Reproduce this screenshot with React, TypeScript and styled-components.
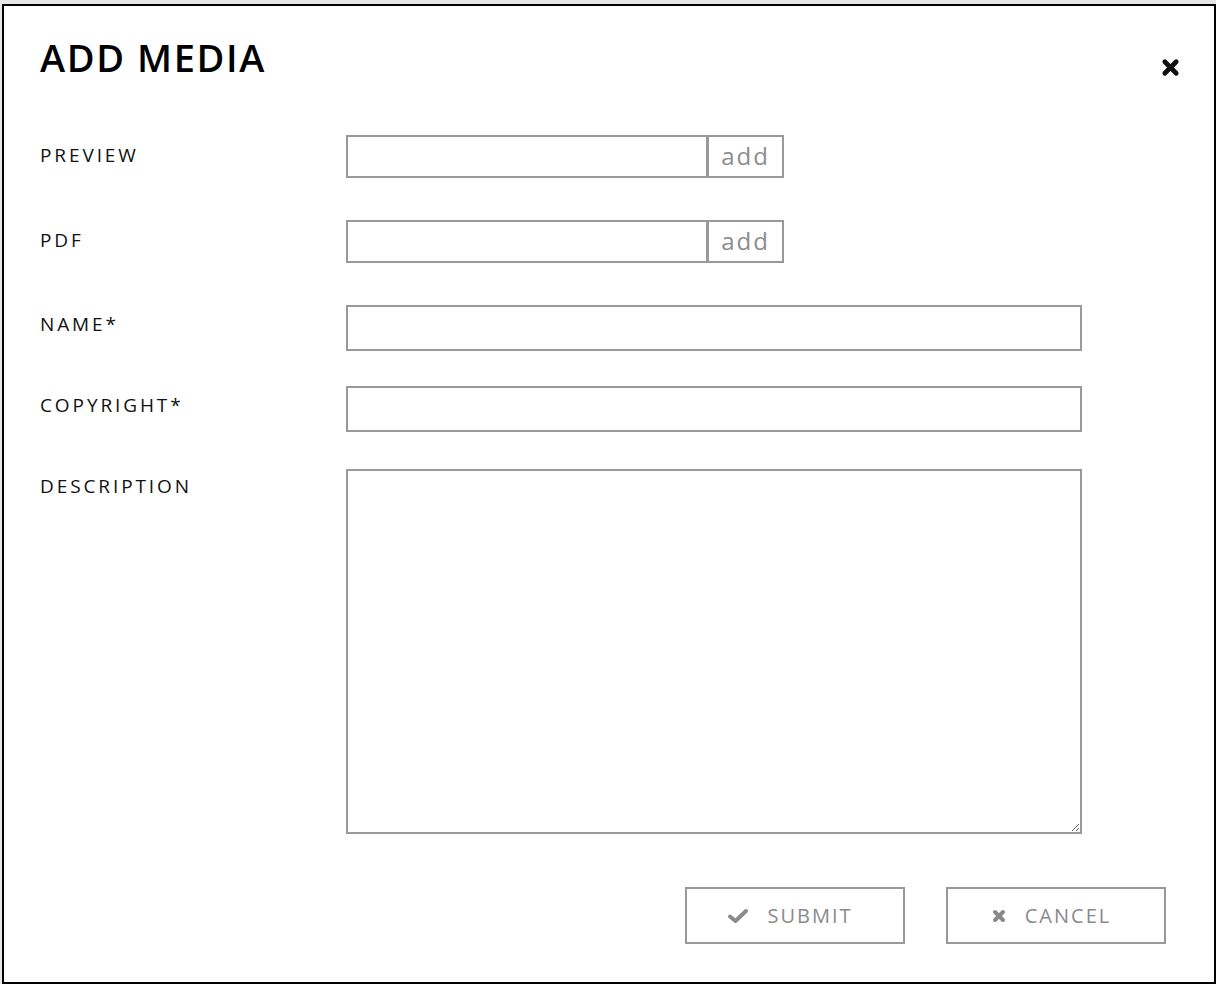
import React from "react";
import styled, { createGlobalStyle } from "styled-components";

const GlobalStyle = createGlobalStyle`
  html, body {
    margin: 0;
    padding: 0;
    background: #e6e6e6;
  }
  body {
    font-family: "Open Sans", "DejaVu Sans", sans-serif;
  }
`;

const fields = [
  { label: "PREVIEW", kind: "file" },
  { label: "PDF", kind: "file" },
  { label: "NAME*", kind: "text" },
  { label: "COPYRIGHT*", kind: "text" },
  { label: "DESCRIPTION", kind: "area" },
];

export default function App() {
  return (
    <>
      <GlobalStyle />
      <Backdrop>
        <Modal>
          <Header>
            <Title>ADD MEDIA</Title>
            <Close aria-label="close">
              <svg width="19" height="19" viewBox="0 0 20 20">
                <path
                  d="M4 4 L16 16 M16 4 L4 16"
                  stroke="#111"
                  strokeWidth="5"
                  strokeLinecap="round"
                />
              </svg>
            </Close>
          </Header>
          <Form>
            {fields.map((f) => (
              <Row key={f.label} $kind={f.kind}>
                <Label $kind={f.kind}>{f.label}</Label>
                {f.kind === "file" && (
                  <FileGroup>
                    <FileInput type="text" />
                    <AddButton type="button">add</AddButton>
                  </FileGroup>
                )}
                {f.kind === "text" && <TextInput type="text" />}
                {f.kind === "area" && <TextArea />}
              </Row>
            ))}
          </Form>
          <Actions>
            <ActionButton type="button">
              <svg width="22" height="16" viewBox="0 0 22 16">
                <path
                  d="M3 8.5 L8.5 13 L19 3"
                  fill="none"
                  stroke="#8a8a8a"
                  strokeWidth="4"
                  strokeLinejoin="round"
                  strokeLinecap="round"
                />
              </svg>
              SUBMIT
            </ActionButton>
            <ActionButton type="button">
              <svg width="16" height="16" viewBox="0 0 20 20">
                <path
                  d="M5 5 L15 15 M15 5 L5 15"
                  stroke="#8a8a8a"
                  strokeWidth="5"
                  strokeLinecap="round"
                />
              </svg>
              CANCEL
            </ActionButton>
          </Actions>
        </Modal>
      </Backdrop>
    </>
  );
}

const Backdrop = styled.div`
  padding: 4px 0 0 2px;
  height: 984px;
  box-sizing: border-box;
`;

const Modal = styled.div`
  width: 1214px;
  height: 980px;
  box-sizing: border-box;
  border: 2px solid #000;
  background: #fff;
  padding: 0 48px 0 36px;
  display: flex;
  flex-direction: column;
`;

const Header = styled.div`
  display: flex;
  justify-content: space-between;
  align-items: flex-start;
  height: 129px;
`;

const Title = styled.h1`
  margin: 25px 0 0 0;
  font-size: 38px;
  font-weight: 600;
  letter-spacing: 1.6px;
  color: #000;
  line-height: 52px;
`;

const Close = styled.button`
  background: none;
  border: none;
  padding: 0;
  margin: 52px -14px 0 0;
  cursor: pointer;
  display: flex;
`;

const Form = styled.div`
  display: flex;
  flex-direction: column;
`;

const Row = styled.div<{ $kind: string }>`
  display: flex;
  align-items: flex-start;
  margin-bottom: ${(p) => (p.$kind === "file" ? "42px" : "35px")};
`;

const Label = styled.div<{ $kind: string }>`
  width: 306px;
  flex-shrink: 0;
  font-size: 19px;
  letter-spacing: 2.9px;
  color: #111;
  padding-top: ${(p) => (p.$kind === "file" ? "8px" : "7px")};
  line-height: 24px;
`;

const FileGroup = styled.div`
  display: flex;
`;

const FileInput = styled.input`
  width: 362px;
  height: 43px;
  box-sizing: border-box;
  border: 2px solid #999;
  margin: 0;
  outline: none;
`;

const AddButton = styled.button`
  width: 77px;
  height: 43px;
  box-sizing: border-box;
  border: 2px solid #999;
  background: #fff;
  color: #8c8c8c;
  font-family: "Open Sans", sans-serif;
  font-size: 24px;
  letter-spacing: 2px;
  padding: 0 0 2px 0;
  margin: 0 0 0 -1px;
  line-height: 1;
`;

const TextInput = styled.input`
  width: 736px;
  height: 46px;
  box-sizing: border-box;
  border: 2px solid #999;
  margin: 0;
  outline: none;
`;

const TextArea = styled.textarea`
  width: 736px;
  height: 365px;
  box-sizing: border-box;
  border: 2px solid #999;
  margin: 2px 0 0 0;
  outline: none;
  resize: both;
`;

const Actions = styled.div`
  display: flex;
  justify-content: flex-end;
  gap: 41px;
  margin-top: 18px;
`;

const ActionButton = styled.button`
  width: 220px;
  height: 57px;
  box-sizing: border-box;
  border: 2px solid #999;
  background: #fff;
  color: #8a8a8a;
  font-family: "Open Sans", sans-serif;
  font-size: 20px;
  letter-spacing: 2px;
  display: flex;
  align-items: center;
  justify-content: center;
  gap: 18px;
  padding: 0 10px 0 0;
  cursor: pointer;
`;
